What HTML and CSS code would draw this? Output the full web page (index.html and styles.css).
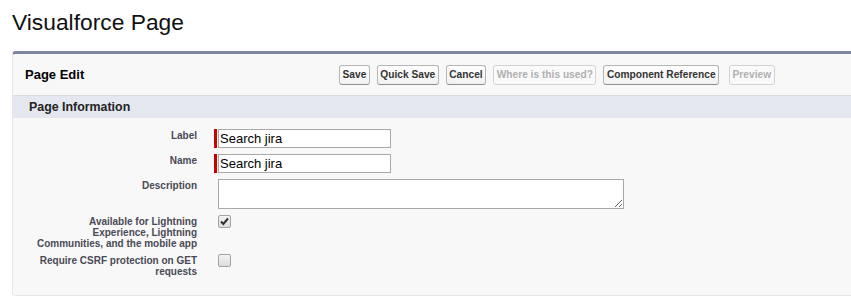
FILE: index.html
```html
<!DOCTYPE html>
<html lang="en">
<head>
  <meta charset="UTF-8">
  <meta name="viewport" content="width=device-width, initial-scale=1.0">
  <title>Visualforce Page</title>
  <link rel="stylesheet" href="styles.css">
</head>
<body>

  <!-- Page Title -->
  <h1 class="page-title">Visualforce Page</h1>

  <!-- Edit Panel -->
  <div class="panel">
    <div class="panel-header">
      <h2 class="panel-title">Page Edit</h2>
      <div class="panel-buttons">
        <button class="btn">Save</button>
        <button class="btn">Quick Save</button>
        <button class="btn">Cancel</button>
        <button class="btn" disabled>Where is this used?</button>
        <button class="btn">Component Reference</button>
        <button class="btn btn-preview" disabled>Preview</button>
      </div>
    </div>

    <div class="section-header">
      <h3>Page Information</h3>
    </div>

    <!-- Form Fields -->
    <div class="form-grid">
      <label class="field-label">Label</label>
      <div class="field-data">
        <div class="required">
          <span class="required-bar"></span>
          <input type="text" class="text-input" value="Search jira" />
        </div>
      </div>

      <label class="field-label">Name</label>
      <div class="field-data">
        <div class="required">
          <span class="required-bar"></span>
          <input type="text" class="text-input" value="Search jira" />
        </div>
      </div>

      <label class="field-label">Description</label>
      <div class="field-data">
        <textarea class="text-area"></textarea>
      </div>

      <label class="field-label">Available for Lightning Experience, Lightning Communities, and the mobile app</label>
      <div class="field-data">
        <span class="checkbox checked">
          <svg width="11" height="11" viewBox="0 0 11 11"><path d="M2 5.5 L4.3 8 L9 2.5" fill="none" stroke="#333" stroke-width="2"/></svg>
        </span>
      </div>

      <label class="field-label">Require CSRF protection on GET requests</label>
      <div class="field-data">
        <span class="checkbox"></span>
      </div>
    </div>
  </div>

</body>
</html>
```

FILE: styles.css
```css
* {
  margin: 0;
  padding: 0;
  box-sizing: border-box;
}
body {
  font-family: Arial, "Liberation Sans", sans-serif;
  background-color: #fff;
  color: #000;
  overflow: hidden;
}
.page-title {
  font-size: 22.8px;
  font-weight: normal;
  line-height: 26px;
  padding: 9px 0 0 12px;
  margin-bottom: 16px;
  color: #111;
}
.panel {
  margin-left: 12px;
  width: 860px;
  background-color: #f8f8f8;
  border: 1px solid #e6e6e6;
  border-top: 3px solid #7c869b;
  border-radius: 4px;
}
.panel-header {
  display: flex;
  align-items: center;
  height: 42px;
  padding-left: 12px;
  border-bottom: 1px solid #dadada;
}
.panel-title {
  width: 314px;
  font-size: 13px;
  font-weight: bold;
  color: #000;
}
.panel-buttons {
  display: flex;
  gap: 7px;
}
.btn {
  font-family: Arial, "Liberation Sans", sans-serif;
  font-size: 10.2px;
  font-weight: bold;
  color: #333;
  height: 20px;
  padding: 0 2.5px;
  border: 1px solid #b5b5b5;
  border-bottom-color: #8f8f8f;
  border-radius: 3px;
  background: linear-gradient(#ffffff, #f1f1f1);
  cursor: pointer;
}
.btn:disabled {
  color: #b0b0b0;
  border-color: #d2d2d2;
  background: #fafafa;
  cursor: default;
}
.btn-preview {
  margin-left: 3px;
}
.section-header {
  height: 22px;
  display: flex;
  align-items: center;
  padding-left: 16px;
  background-color: #e4e7f0;
}
.section-header h3 {
  font-size: 12.4px;
  font-weight: bold;
  color: #222;
}
.form-grid {
  display: grid;
  grid-template-columns: 165px 1fr;
  column-gap: 17px;
  padding: 8px 0 16px 19px;
}
.field-label {
  font-size: 10px;
  font-weight: bold;
  line-height: 11px;
  color: #4a4a56;
  text-align: right;
  padding: 4px 0 2px;
}
.field-data {
  padding: 3px 0;
}
.required {
  display: flex;
  align-items: stretch;
}
.required-bar {
  width: 3px;
  margin-right: 1px;
  background-color: #c00;
}
.text-input {
  width: 173px;
  height: 19px;
  padding: 0 1px;
  border: 1px solid #a9a9a9;
  font-family: Arial, "Liberation Sans", sans-serif;
  font-size: 13px;
  color: #000;
  background: #fff;
}
.text-area {
  display: block;
  width: 406px;
  height: 30px;
  margin-left: 4px;
  border: 1px solid #a9a9a9;
  background: #fff;
}
.checkbox {
  display: flex;
  align-items: center;
  justify-content: center;
  width: 13px;
  height: 13px;
  margin-left: 4px;
  border: 1px solid #a3a3a3;
  border-radius: 2px;
  background: linear-gradient(#f3f3f3, #dcdcdc);
}
```
